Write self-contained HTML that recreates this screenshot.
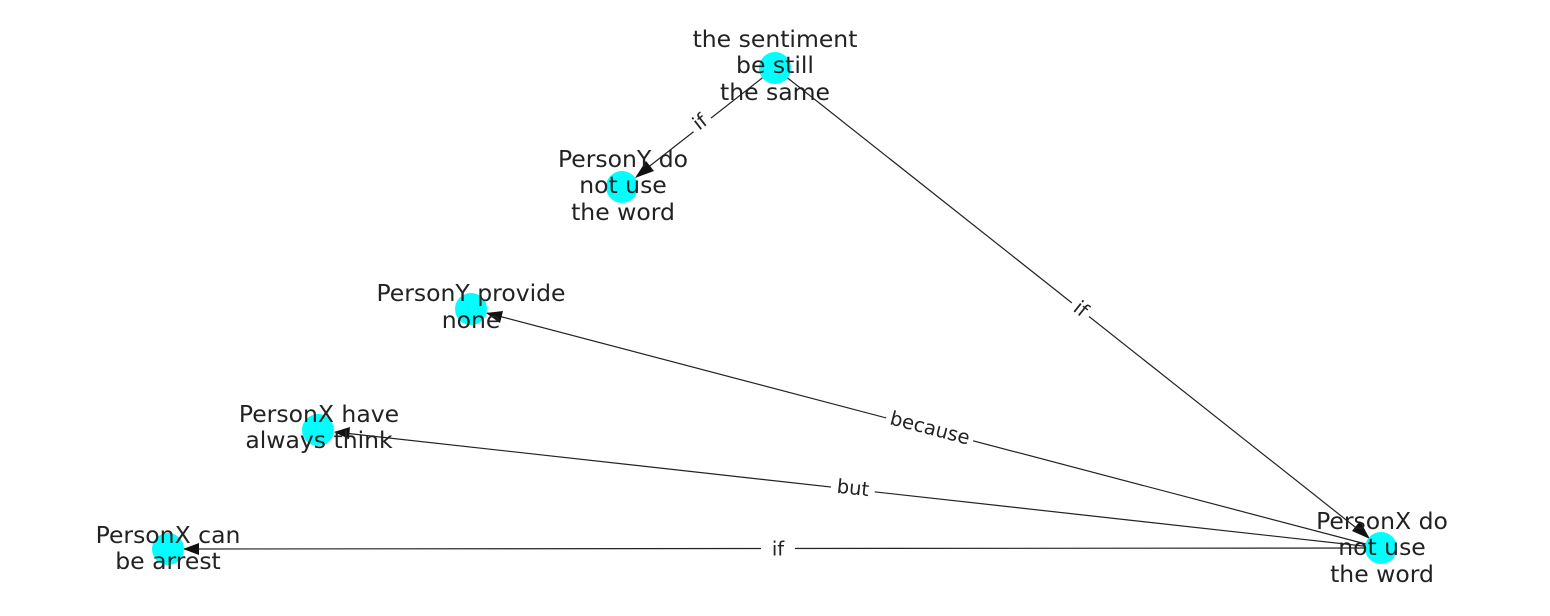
<!DOCTYPE html>
<html><head><style>
html,body{margin:0;padding:0;background:#fff;}
svg{display:block;}
text{font-family:"DejaVu Sans","Liberation Sans",sans-serif;fill:#222;}
.n{font-size:23.5px;text-anchor:middle;}
.e{font-size:19.5px;text-anchor:middle;dominant-baseline:central;}
</style></head><body>
<svg width="1550" height="616" viewBox="0 0 1550 616" xmlns="http://www.w3.org/2000/svg">
<g stroke="#222" stroke-width="1.2">
<line x1="775" y1="68" x2="637" y2="176"/>
<line x1="775" y1="68" x2="1369" y2="538"/>
<line x1="1381" y1="548" x2="487" y2="313"/>
<line x1="1381" y1="548" x2="335" y2="432"/>
<line x1="1381" y1="548" x2="184" y2="549"/>
</g>
<g fill="#111">
<polygon points="635,178 646,161 654,171"/>
<polygon points="1370,539 1352,531 1360,521"/>
<polygon points="486,313 503,311 500,323"/>
<polygon points="334,432 350,427 349,439"/>
<polygon points="183,549 199,543 199,555"/>
</g>
<g fill="#00ffff">
<circle cx="775" cy="68" r="16"/>
<circle cx="622" cy="187" r="16"/>
<circle cx="471" cy="309" r="16"/>
<circle cx="318" cy="430" r="16"/>
<circle cx="168" cy="549" r="16"/>
<circle cx="1381" cy="548" r="16"/>
</g>
<g>
<g transform="translate(700,122) rotate(-37.9)"><rect x="-11" y="-12" width="22" height="24" fill="#fff"/><text class="e">if</text></g>
<g transform="translate(1081,309) rotate(38.4)"><rect x="-11" y="-12" width="22" height="24" fill="#fff"/><text class="e">if</text></g>
<g transform="translate(930,428) rotate(14.7)"><rect x="-45" y="-12" width="90" height="24" fill="#fff"/><text class="e">because</text></g>
<g transform="translate(853,488) rotate(6.3)"><rect x="-22" y="-12" width="44" height="24" fill="#fff"/><text class="e">but</text></g>
<g transform="translate(778,549)"><rect x="-17" y="-12" width="34" height="24" fill="#fff"/><text class="e">if</text></g>
</g>
<text class="n"><tspan x="775" y="47">the sentiment</tspan><tspan x="775" y="73">be still</tspan><tspan x="775" y="100">the same</tspan></text>
<text class="n"><tspan x="623" y="167">PersonY do</tspan><tspan x="623" y="193">not use</tspan><tspan x="623" y="220">the word</tspan></text>
<text class="n"><tspan x="471" y="301">PersonY provide</tspan><tspan x="471" y="328">none</tspan></text>
<text class="n"><tspan x="319" y="422">PersonX have</tspan><tspan x="319" y="448">always think</tspan></text>
<text class="n"><tspan x="168" y="543">PersonX can</tspan><tspan x="168" y="569">be arrest</tspan></text>
<text class="n"><tspan x="1382" y="529">PersonX do</tspan><tspan x="1382" y="555">not use</tspan><tspan x="1382" y="582">the word</tspan></text>
</svg>
</body></html>
